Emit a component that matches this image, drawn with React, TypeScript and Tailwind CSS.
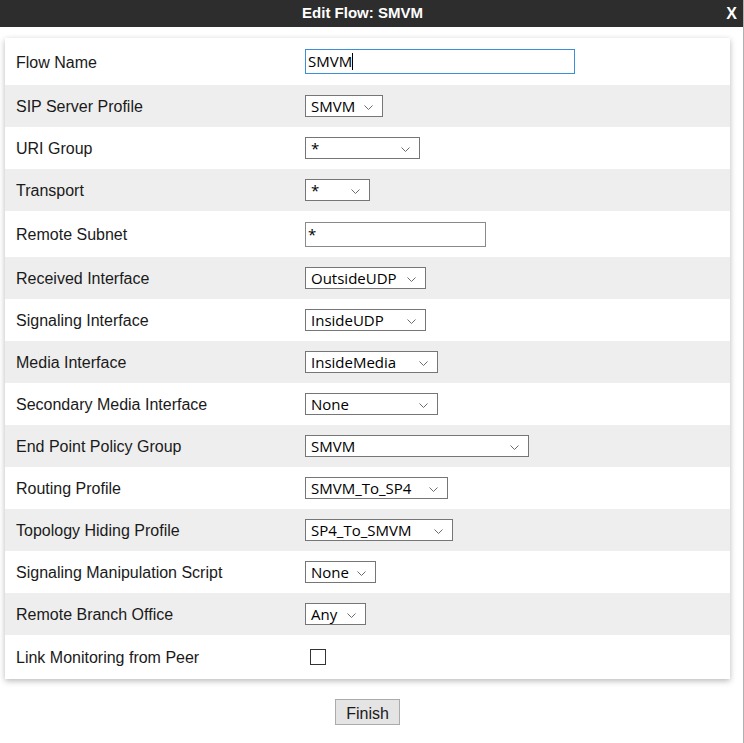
import React from "react";

type Field =
  | { label: string; kind: "input"; value: string; width: number; focused?: boolean }
  | { label: string; kind: "select"; value: string; width: number }
  | { label: string; kind: "checkbox" };

const fields: Field[] = [
  { label: "Flow Name", kind: "input", value: "SMVM", width: 270, focused: true },
  { label: "SIP Server Profile", kind: "select", value: "SMVM", width: 78 },
  { label: "URI Group", kind: "select", value: "*", width: 115 },
  { label: "Transport", kind: "select", value: "*", width: 65 },
  { label: "Remote Subnet", kind: "input", value: "*", width: 181 },
  { label: "Received Interface", kind: "select", value: "OutsideUDP", width: 121 },
  { label: "Signaling Interface", kind: "select", value: "InsideUDP", width: 121 },
  { label: "Media Interface", kind: "select", value: "InsideMedia", width: 133 },
  { label: "Secondary Media Interface", kind: "select", value: "None", width: 133 },
  { label: "End Point Policy Group", kind: "select", value: "SMVM", width: 224 },
  { label: "Routing Profile", kind: "select", value: "SMVM_To_SP4", width: 143 },
  { label: "Topology Hiding Profile", kind: "select", value: "SP4_To_SMVM", width: 148 },
  { label: "Signaling Manipulation Script", kind: "select", value: "None", width: 71 },
  { label: "Remote Branch Office", kind: "select", value: "Any", width: 61 },
  { label: "Link Monitoring from Peer", kind: "checkbox" },
];

// row heights measured off the screenshot
const rowHeights = [47, 42, 42, 42, 46, 42, 42, 42, 42, 42, 42, 42, 42, 42, 44];

function Chevron() {
  return (
    <svg width="9" height="5" viewBox="0 0 9 5" className="absolute right-[9px] top-[9px] pointer-events-none">
      <path d="M0.5 0.5 L4.5 4.5 L8.5 0.5" fill="none" stroke="#6b6b6b" strokeWidth="1" />
    </svg>
  );
}

function Control({ field }: { field: Field }) {
  if (field.kind === "checkbox") {
    return <span className="ml-[5px] block w-[16px] h-[16px] border border-[#333] bg-white" />;
  }
  if (field.kind === "input") {
    return (
      <div
        className={`h-[25px] flex items-center pl-[2px] bg-white font-['Open_Sans',sans-serif] text-[15px] text-black border ${
          field.focused ? "border-[#3b8fd9]" : "border-[#8a8a8a]"
        }`}
        style={{ width: field.width }}
      >
        <span>{field.value}</span>
        {field.focused && <span className="w-px h-[17px] bg-black" />}
      </div>
    );
  }
  return (
    <div
      className="relative h-[22px] flex items-center pl-[5px] bg-white border border-[#767676] font-['Open_Sans',sans-serif] text-[15px] text-black"
      style={{ width: field.width }}
    >
      <span className="leading-none pt-[1px]">{field.value}</span>
      <Chevron />
    </div>
  );
}

export default function App() {
  return (
    <div className="w-[744px] h-[743px] bg-white border-r border-[#b0b0b0] font-['Liberation_Sans',Arial,sans-serif] overflow-hidden">
      <div className="relative h-[27px] bg-[#2d2d2d] flex items-center justify-center pr-[18px]">
        <span className="text-white font-bold text-[15px]">Edit Flow: SMVM</span>
        <span className="absolute right-[6px] text-white font-bold text-[16px]">X</span>
      </div>

      <div className="pt-[11px] pl-[5px]">
        <div className="w-[725px] bg-white shadow-[0_2px_6px_rgba(0,0,0,0.28)]">
          {fields.map((f, i) => (
            <div
              key={f.label}
              className={`flex items-center ${i % 2 === 1 ? "bg-[#eeeeee]" : "bg-white"}`}
              style={{ height: rowHeights[i] }}
            >
              <div className="w-[300px] pl-[11px] pt-[2px] text-[16px] text-[#1a1a1a]">{f.label}</div>
              <Control field={f} />
            </div>
          ))}
        </div>

        <div className="w-[725px] flex justify-center mt-[20px]">
          <button className="h-[26px] w-[65px] pt-[2px] bg-[#e4e4e4] border border-[#ababab] text-[16px] text-[#1a1a1a]">
            Finish
          </button>
        </div>
      </div>
    </div>
  );
}
